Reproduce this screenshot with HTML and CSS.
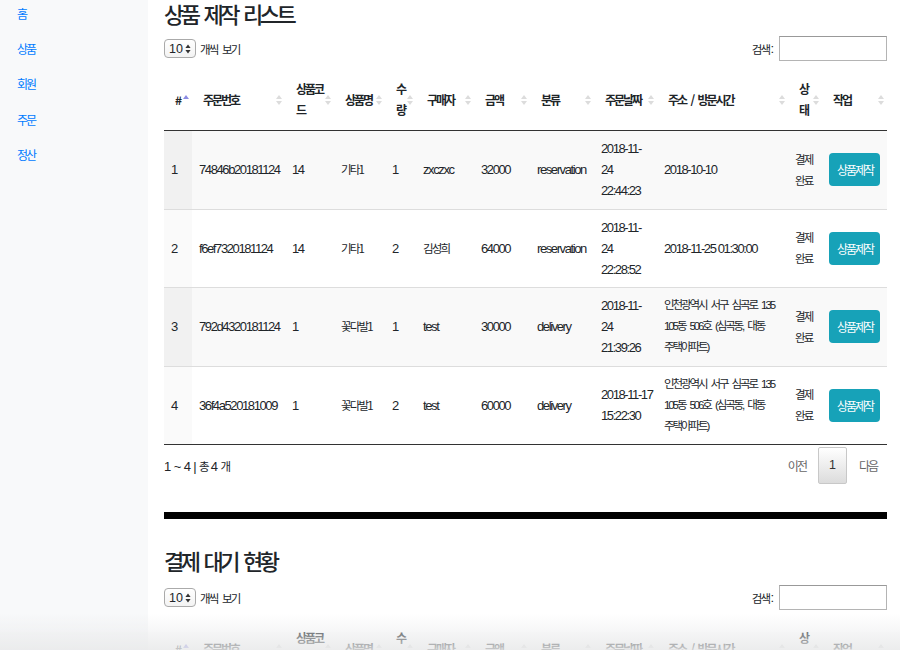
FILE: index.html
```html
<!DOCTYPE html>
<html lang="ko">
<head>
    <meta charset="UTF-8">
    <meta name="viewport" content="width=device-width, initial-scale=1.0">
    <title>상품 제작 리스트</title>
    <link rel="stylesheet" href="styles.css">
</head>
<body>
    <div class="layout">
        <nav class="sidebar">
            <div class="sidebar-nav">
                <a href="#">홈</a>
                <a href="#">상품</a>
                <a href="#">회원</a>
                <a href="#">주문</a>
                <a href="#">정산</a>
            </div>
        </nav>

        <main class="content">
            <!-- 상품 제작 리스트 -->
            <section class="panel">
                <h2 class="page-title">상품 제작 리스트</h2>

                <div class="table-top">
                    <label class="length">
                        <span class="select-box">10
                            <svg width="6" height="10" viewBox="0 0 6 10"><path d="M3 0.5L5.6 4H0.4z M3 9.5L0.4 6h5.2z" fill="#333"/></svg>
                        </span>
                        <span class="ko">개씩 보기</span>
                    </label>
                    <label class="search"><span class="ko">검색</span><span class="colon">:</span><input type="text"></label>
                </div>

                <table class="data-table">
                    <colgroup>
                        <col class="c-no"><col class="c-order"><col class="c-code"><col class="c-name">
                        <col class="c-qty"><col class="c-buyer"><col class="c-price"><col class="c-type">
                        <col class="c-date"><col class="c-addr"><col class="c-state"><col class="c-act">
                    </colgroup>
                    <thead>
                        <tr>
                            <th class="sorting-asc">#</th>
                            <th class="sorting">주문번호</th>
                            <th class="sorting">상품코<br>드</th>
                            <th class="sorting">상품명</th>
                            <th class="sorting">수<br>량</th>
                            <th class="sorting">구매자</th>
                            <th class="sorting">금액</th>
                            <th class="sorting">분류</th>
                            <th class="sorting">주문날짜</th>
                            <th class="sorting">주소 / 방문시간</th>
                            <th class="sorting">상<br>태</th>
                            <th class="sorting">작업</th>
                        </tr>
                    </thead>
                    <tbody>
                        <tr>
                            <td class="sorted">1</td>
                            <td>74846b20181124</td>
                            <td>14</td>
                            <td class="ko">기타1</td>
                            <td>1</td>
                            <td>zxczxc</td>
                            <td>32000</td>
                            <td>reservation</td>
                            <td class="wrap">2018-11-24 22:44:23</td>
                            <td>2018-10-10</td>
                            <td class="wrap ko">결제 완료</td>
                            <td><button class="btn-make">상품제작</button></td>
                        </tr>
                        <tr>
                            <td class="sorted">2</td>
                            <td>f6ef7320181124</td>
                            <td>14</td>
                            <td class="ko">기타1</td>
                            <td>2</td>
                            <td class="ko">김성희</td>
                            <td>64000</td>
                            <td>reservation</td>
                            <td class="wrap">2018-11-24 22:28:52</td>
                            <td>2018-11-25 01:30:00</td>
                            <td class="wrap ko">결제 완료</td>
                            <td><button class="btn-make">상품제작</button></td>
                        </tr>
                        <tr>
                            <td class="sorted">3</td>
                            <td>792d4320181124</td>
                            <td>1</td>
                            <td class="ko">꽃다발1</td>
                            <td>1</td>
                            <td>test</td>
                            <td>30000</td>
                            <td>delivery</td>
                            <td class="wrap">2018-11-24 21:39:26</td>
                            <td class="addr">인천광역시 서구 심곡로 135<br>105동 506호 (심곡동, 대동<br>주택아파트)</td>
                            <td class="wrap ko">결제 완료</td>
                            <td><button class="btn-make">상품제작</button></td>
                        </tr>
                        <tr>
                            <td class="sorted">4</td>
                            <td>36f4a520181009</td>
                            <td>1</td>
                            <td class="ko">꽃다발1</td>
                            <td>2</td>
                            <td>test</td>
                            <td>60000</td>
                            <td>delivery</td>
                            <td class="wrap"><span class="nowrap">2018-11-17</span> 15:22:30</td>
                            <td class="addr">인천광역시 서구 심곡로 135<br>105동 506호 (심곡동, 대동<br>주택아파트)</td>
                            <td class="wrap ko">결제 완료</td>
                            <td><button class="btn-make">상품제작</button></td>
                        </tr>
                    </tbody>
                </table>

                <div class="table-bottom">
                    <div class="info">1 ~ 4 | <span class="ko">총</span> 4 <span class="ko">개</span></div>
                    <div class="paging">
                        <span class="pg disabled">이전</span>
                        <span class="pg current">1</span>
                        <span class="pg disabled">다음</span>
                    </div>
                </div>
            </section>

            <hr class="divider">

            <!-- 결제 대기 현황 -->
            <section class="panel panel-second">
                <h2 class="page-title">결제 대기 현황</h2>

                <div class="table-top">
                    <label class="length">
                        <span class="select-box">10
                            <svg width="6" height="10" viewBox="0 0 6 10"><path d="M3 0.5L5.6 4H0.4z M3 9.5L0.4 6h5.2z" fill="#333"/></svg>
                        </span>
                        <span class="ko">개씩 보기</span>
                    </label>
                    <label class="search"><span class="ko">검색</span><span class="colon">:</span><input type="text"></label>
                </div>

                <table class="data-table">
                    <colgroup>
                        <col class="c-no"><col class="c-order"><col class="c-code"><col class="c-name">
                        <col class="c-qty"><col class="c-buyer"><col class="c-price"><col class="c-type">
                        <col class="c-date"><col class="c-addr"><col class="c-state"><col class="c-act">
                    </colgroup>
                    <thead>
                        <tr>
                            <th class="sorting-asc">#</th>
                            <th class="sorting">주문번호</th>
                            <th class="sorting">상품코<br>드</th>
                            <th class="sorting">상품명</th>
                            <th class="sorting">수<br>량</th>
                            <th class="sorting">구매자</th>
                            <th class="sorting">금액</th>
                            <th class="sorting">분류</th>
                            <th class="sorting">주문날짜</th>
                            <th class="sorting">주소 / 방문시간</th>
                            <th class="sorting">상<br>태</th>
                            <th class="sorting">작업</th>
                        </tr>
                    </thead>
                    <tbody>
                        <tr>
                            <td class="empty ko" colspan="12">데이터가 없습니다</td>
                        </tr>
                    </tbody>
                </table>
            </section>
        </main>
    </div>

    <div class="bottom-fade"></div>
</body>
</html>
```

FILE: styles.css
```css
body {
    margin: 0;
    font-family: "Liberation Sans", "Noto Sans CJK KR", sans-serif;
    font-size: 13px;
    letter-spacing: -1.4px;
    color: #212529;
    background-color: #fff;
}
.ko {
    font-family: "Noto Sans CJK KR", sans-serif;
    font-size: 11.5px;
    letter-spacing: -1.8px;
    word-spacing: 3px;
}
.layout {
    display: flex;
    min-height: 100vh;
}

/* sidebar */
.sidebar {
    width: 148px;
    flex: none;
    background-color: #f8f9fa;
}
.sidebar-nav {
    display: flex;
    flex-direction: column;
    margin-top: -4px;
}
.sidebar-nav a {
    color: #007bff;
    text-decoration: none;
    padding: 0 17px;
    line-height: 35.2px;
    font-family: "Noto Sans CJK KR", sans-serif;
    font-size: 12px;
    letter-spacing: -2px;
}

/* main */
.content {
    flex: 1;
    min-width: 0;
    padding: 0 13px 0 16px;
}
.page-title {
    margin: 0;
    font-family: "Noto Sans CJK KR", sans-serif;
    font-size: 22px;
    font-weight: 500;
    line-height: 26px;
    letter-spacing: -3.4px;
    word-spacing: 3px;
}
.table-top {
    display: flex;
    justify-content: space-between;
    align-items: center;
    margin-top: 9px;
    height: 27px;
}
.panel-second .table-top {
    margin-top: 11px;
}
.length {
    display: flex;
    align-items: center;
    gap: 4px;
}
.select-box {
    width: 32px;
    height: 19px;
    box-sizing: border-box;
    border: 1px solid #aaa;
    border-radius: 4px;
    background: linear-gradient(#fff, #f3f3f3);
    display: flex;
    align-items: center;
    justify-content: space-between;
    padding: 0 4px;
    font-size: 12.5px;
    letter-spacing: 0;
}
.search {
    display: flex;
    align-items: center;
}
.search .colon {
    letter-spacing: 0;
    margin-left: 1px;
}
.search input {
    width: 108px;
    height: 25px;
    box-sizing: border-box;
    margin: 0 0 0 5px;
    padding: 0 4px;
    border: 1px solid #b4b4b4;
    border-top-color: #999;
    background: #fff;
}

/* table */
.data-table {
    width: 100%;
    table-layout: fixed;
    border-collapse: collapse;
    margin-top: 7px;
}
.c-no { width: 28px; }
.c-order { width: 93px; }
.c-code { width: 49px; }
.c-name { width: 51px; }
.c-qty { width: 31px; }
.c-buyer { width: 58px; }
.c-price { width: 56px; }
.c-type { width: 64px; }
.c-date { width: 63px; }
.c-addr { width: 131px; }
.c-state { width: 34px; }
.c-act { width: 65px; }

.data-table th {
    position: relative;
    text-align: left;
    vertical-align: middle;
    padding: 9px 12px 10px 11px;
    border-bottom: 1px solid #333;
    line-height: 21px;
    white-space: nowrap;
    font-family: "Noto Sans CJK KR", sans-serif;
    font-size: 12px;
    font-weight: 700;
    letter-spacing: -2px;
    word-spacing: 3px;
}
.data-table th::before,
.data-table th::after {
    content: "";
    position: absolute;
    right: 3px;
    border-left: 3px solid transparent;
    border-right: 3px solid transparent;
}
.data-table th::before {
    top: calc(50% - 5px);
    border-bottom: 4px solid #dcdcdc;
}
.data-table th::after {
    top: calc(50% + 1px);
    border-top: 4px solid #dcdcdc;
}
.data-table th.sorting-asc::before {
    border-bottom-color: #8b8be3;
}
.data-table th.sorting-asc::after {
    border-top-color: transparent;
}
.data-table td {
    padding: 7px 7px 7.5px;
    line-height: 21px;
    vertical-align: middle;
    border-top: 1px solid #ddd;
    white-space: nowrap;
}
.data-table tbody tr:first-child td {
    border-top: none;
}
.data-table tbody tr:last-child td {
    border-bottom: 1px solid #333;
}
.data-table tbody tr:nth-child(odd) {
    background-color: #f9f9f9;
}
.data-table tbody tr:nth-child(odd) td.sorted {
    background-color: #f1f1f1;
}
.data-table tbody tr:nth-child(even) td.sorted {
    background-color: #fafafa;
}
.data-table td.wrap {
    white-space: normal;
}
.data-table td.addr {
    font-family: "Liberation Sans", "Noto Sans CJK KR", sans-serif;
    font-size: 11.5px;
    letter-spacing: -2.1px;
    word-spacing: 3px;
}
.nowrap {
    white-space: nowrap;
}
.data-table td.empty {
    text-align: center;
    background-color: #f9f9f9;
}
.btn-make {
    background-color: #17a2b8;
    color: #fff;
    border: none;
    border-radius: 4px;
    padding: 6px 7px 6px 8px;
    line-height: 21px;
    font-family: "Noto Sans CJK KR", sans-serif;
    font-size: 12px;
    letter-spacing: -2px;
    cursor: pointer;
}

/* info / paging */
.table-bottom {
    display: flex;
    justify-content: space-between;
    align-items: center;
    padding-top: 2px;
}
.info {
    letter-spacing: -0.6px;
}
.paging {
    display: flex;
    align-items: center;
}
.pg {
    margin-left: 2px;
    padding: 7px 9px;
    line-height: 21px;
    border: 1px solid transparent;
    border-radius: 2px;
    color: #666;
    font-family: "Noto Sans CJK KR", sans-serif;
    font-size: 12px;
    letter-spacing: -2px;
}
.pg.current {
    color: #333;
    font-family: "Liberation Sans", sans-serif;
    font-size: 12.5px;
    letter-spacing: 0;
    padding: 7px 10px;
    border-color: #c8c8c8;
    background: linear-gradient(#fff, #dcdcdc);
}
.divider {
    border: 0;
    height: 7px;
    background-color: #000;
    margin: 28px 0 0;
}
.panel-second {
    margin-top: 28px;
}

.bottom-fade {
    position: fixed;
    left: 0;
    right: 0;
    bottom: 0;
    height: 36px;
    background: linear-gradient(rgba(236, 237, 238, 0), rgba(232, 233, 234, 0.85));
    pointer-events: none;
}
```
